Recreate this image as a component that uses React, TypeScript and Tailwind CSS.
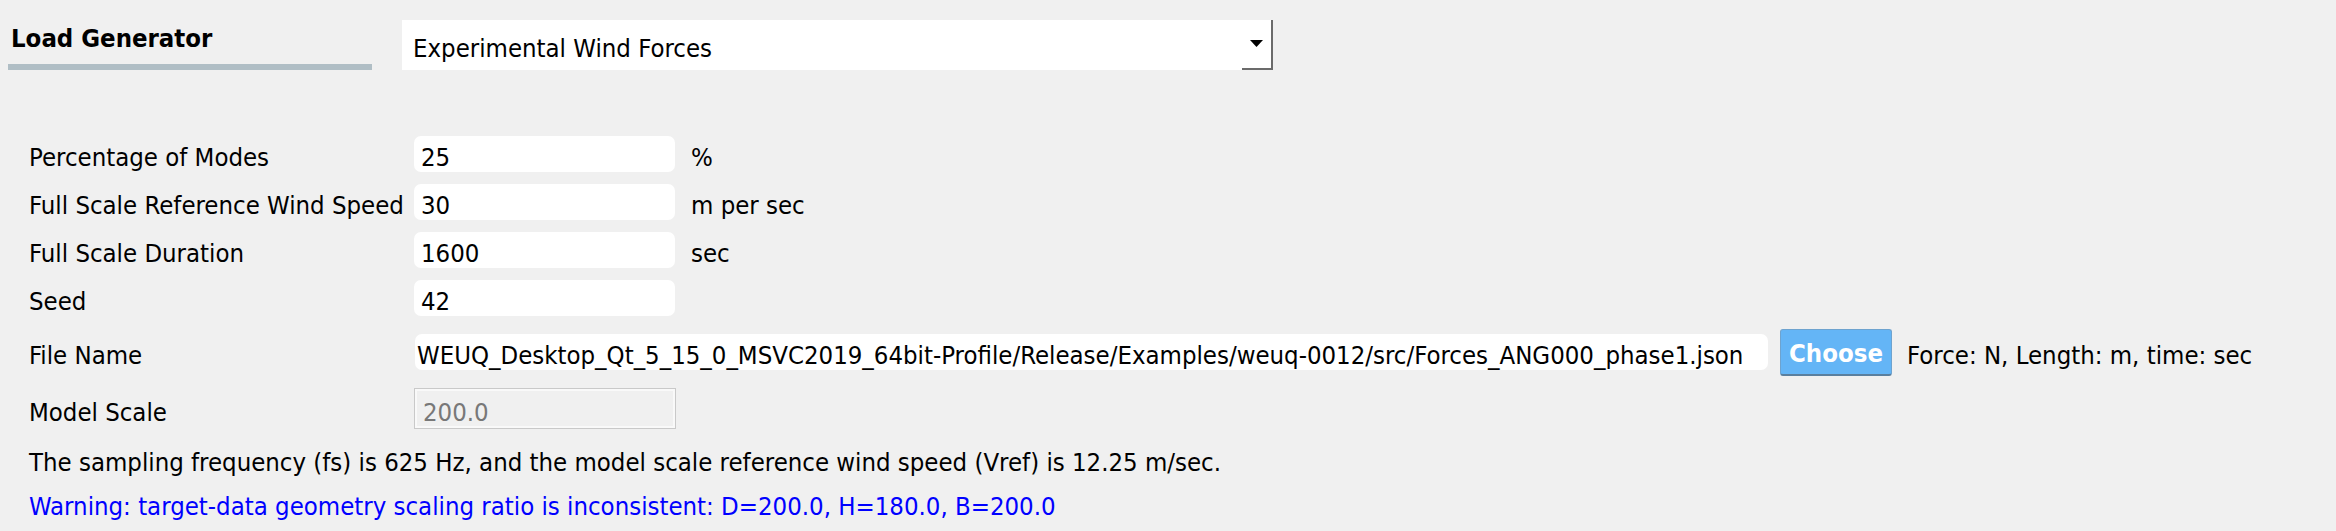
import React from "react";

const fieldList = [
  { id: 1, label: "Percentage of Modes", value: "25", unit: "%" },
  { id: 2, label: "Full Scale Reference Wind Speed", value: "30", unit: "m per sec" },
  { id: 3, label: "Full Scale Duration", value: "1600", unit: "sec" },
  { id: 4, label: "Seed", value: "42", unit: "" },
];

const filePath =
  "WEUQ_Desktop_Qt_5_15_0_MSVC2019_64bit-Profile/Release/Examples/weuq-0012/src/Forces_ANG000_phase1.json";

function FieldRow({ label, value, unit }: { label: string; value: string; unit: string }) {
  return (
    <div className="flex h-[48px] items-center">
      <div className="w-[385px] shrink-0 pt-[6px] whitespace-nowrap">{label}</div>
      <div className="flex h-[36px] w-[261px] shrink-0 items-center rounded-[7px] bg-white pl-[7px] pt-[6px]">
        {value}
      </div>
      {unit && <div className="ml-[16px] pt-[6px] whitespace-nowrap">{unit}</div>}
    </div>
  );
}

export default function App() {
  return (
    <div className="h-[531px] w-full overflow-hidden bg-[#f0f0f0] text-[25.5px] leading-[30px] text-black font-['DejaVu_Sans_Condensed','DejaVu_Sans',sans-serif]">
      {/* header */}
      <div className="flex pt-[20px]">
        <div className="ml-[8px] flex h-[50px] w-[364px] flex-col justify-between">
          <div className="pl-[3px] pt-[4px] font-bold leading-[28px]">Load Generator</div>
          <div className="h-[6px] w-full bg-[#b0bec5]" />
        </div>
        <div className="ml-[30px] flex h-[50px] w-[871px] items-center justify-between bg-white">
          <div className="pl-[11px] pt-[5px] whitespace-nowrap">Experimental Wind Forces</div>
          <div className="flex h-full w-[31px] items-center justify-center border-r-2 border-b-2 border-[#6b6b6b]">
            <svg width="13" height="7" viewBox="0 0 13 7" className="mb-[2px]">
              <polygon points="0,0 13,0 6.5,7" fill="#000" />
            </svg>
          </div>
        </div>
      </div>

      {/* form */}
      <div className="mt-[60px] pl-[29px]">
        {fieldList.map((item) => (
          <FieldRow key={item.id} label={item.label} value={item.value} unit={item.unit} />
        ))}

        <div className="flex h-[60px] items-center">
          <div className="w-[386px] shrink-0 pt-[6px]">File Name</div>
          <div className="flex h-[36px] w-[1353px] shrink-0 items-center overflow-hidden rounded-[7px] bg-white pl-[2px] pt-[6px] whitespace-nowrap">
            {filePath}
          </div>
          <button className="ml-[12px] h-[47px] w-[112px] shrink-0 rounded-[3px] border border-[#6ea3cf] border-b-2 border-b-[#5a7f9e] bg-[#64b5f6] pt-[3px] font-bold text-white">
            Choose
          </button>
          <div className="ml-[15px] pt-[6px] whitespace-nowrap">Force: N, Length: m, time: sec</div>
        </div>

        <div className="flex h-[53px] items-center">
          <div className="w-[385px] shrink-0 pt-[6px]">Model Scale</div>
          <div className="flex h-[41px] w-[262px] shrink-0 items-center border border-[#c9c9c9] bg-[#f0f0f0] pl-[8px] pt-[6px] text-[#787878] shadow-[inset_0_0_0_2px_#f9f9f9]">
            200.0
          </div>
        </div>

        <div className="flex h-[52px] items-center pt-[2px] whitespace-nowrap">
          The sampling frequency (fs) is 625 Hz, and the model scale reference wind speed (Vref) is 12.25 m/sec.
        </div>
        <div className="flex h-[38px] items-center text-[#0000ff] whitespace-nowrap">
          Warning: target-data geometry scaling ratio is inconsistent: D=200.0, H=180.0, B=200.0
        </div>
      </div>
    </div>
  );
}
